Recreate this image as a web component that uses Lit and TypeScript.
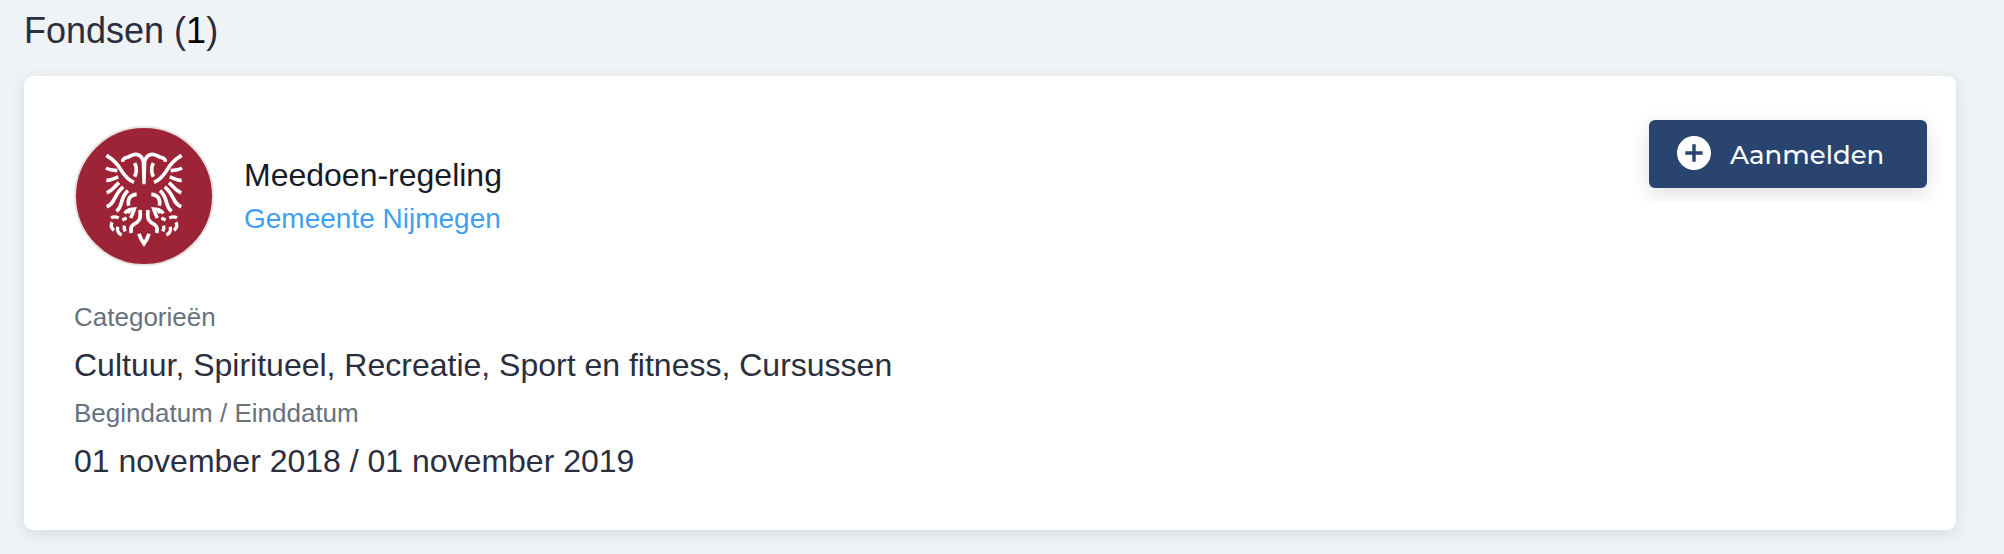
import { LitElement, html, svg, css } from "lit";
import { customElement, property } from "lit/decorators.js";

// Left half of the double-headed eagle; the right half is its mirror image.
const wing = svg`
  <path d="M127 118C149 131 158 141 168 157C179 176 190 191 210 199" />
  <path d="M176 137C176 125 184 126 193 123C202 119 207 114 217 115C232 117 239 130 240 148" />
  <path d="M212 141C219 155 219 167 212 182" />
  <path d="M126 156C137 162 146 163 160 164" />
  <path d="M127 193C140 194 149 187 163 183" />
  <path d="M128 230C144 225 150 213 165 200" />
  <path d="M128 272C155 263 149 234 178 213" />
  <path d="M157 286C178 272 166 247 192 224" />
  <path d="M194 269C190 249 198 236 218 235" />
  <path d="M183 293C186 284 194 280 211 279C208 288 205 296 200 306" />
  <path d="M190 281L199 290" />
  <path d="M228 282C230 303 229 312 219 319C205 326 197 332 202 351" />
  <g stroke-width="10">
    <path d="M141 306C148 301 156 302 164 306" />
    <path d="M175 312L188 306" />
    <path d="M144 319C139 329 141 336 150 343" />
    <path d="M161 332C159 345 161 351 173 357" />
    <path d="M181 329C179 336 180 340 184 346" />
  </g>
`;

@customElement("fund-logo")
class FundLogo extends LitElement {
  static styles = css`
    :host {
      display: block;
      box-sizing: border-box;
      width: 140px;
      height: 140px;
      border-radius: 50%;
      border: 2px solid #e4e2e3;
      background: #9d2437;
      overflow: hidden;
    }
    svg {
      display: block;
      width: 136px;
      height: 136px;
    }
  `;
  render() {
    return html`<svg viewBox="36 36 408 408" fill="none" stroke="#fff" stroke-width="11">
      <g>${wing}</g>
      <g transform="translate(480 0) scale(-1 1)">${wing}</g>
      <path d="M233 140H247L245 205H235Z" fill="#fff" stroke="none" />
      <path d="M225 353Q230 370 240 383Q250 370 255 353" />
    </svg>`;
  }
}

@customElement("apply-button")
class ApplyButton extends LitElement {
  @property() label = "";
  static styles = css`
    :host {
      display: block;
    }
    button {
      display: flex;
      align-items: center;
      box-sizing: border-box;
      width: 278px;
      height: 68px;
      margin: 0;
      padding: 0 0 2px 28px;
      border: 0;
      border-radius: 6px;
      background: #28446f;
      color: #fff;
      box-shadow: 0 6px 20px rgba(0, 0, 0, 0.13);
      clip-path: inset(-20px -20px -14px -20px);
    }
    svg {
      width: 34px;
      height: 34px;
      flex: none;
    }
    .label {
      margin: 4px 0 0 19px;
      font: 500 26px/32px Montserrat, Inter, sans-serif;
      white-space: nowrap;
      -webkit-font-smoothing: antialiased;
    }
  `;
  render() {
    return html`<button>
      <svg viewBox="0 0 34 34">
        <circle cx="17" cy="17" r="17" fill="#fff" />
        <path d="M17 8.3V25.7M8.3 17H25.7" stroke="#28446f" stroke-width="3.4" />
      </svg>
      <span class="label">${this.label}</span>
    </button>`;
  }
}

@customElement("app-root")
class AppRoot extends LitElement {
  static styles = css`
    :host {
      display: block;
      box-sizing: border-box;
      height: 554px;
      padding: 5px 48px 24px 24px;
      background: #eff3f6;
      font-family: "Liberation Sans", Arial, sans-serif;
      color: #2a2e3d;
    }
    .title {
      margin: 0 0 19px;
      font-weight: 400;
      font-size: 36px;
      line-height: 52px;
    }
    .count {
      color: #000;
    }
    .card {
      box-sizing: border-box;
      height: 454px;
      padding: 44px 29px 0 50px;
      border-radius: 9px;
      background: #fff;
      box-shadow: 0 4px 15px rgba(40, 55, 70, 0.12);
    }
    .head {
      display: flex;
      justify-content: space-between;
      align-items: flex-start;
    }
    .fund {
      display: flex;
      align-items: center;
      gap: 30px;
      padding-top: 6px;
    }
    .names {
      padding-top: 2px;
      line-height: 44px;
    }
    .name {
      font-size: 32px;
      color: #161b27;
    }
    .org {
      font-size: 28px;
      line-height: 44px;
      color: #419fef;
    }
    .meta {
      margin: 27px 0 0;
      line-height: 48px;
    }
    .key {
      font-size: 26px;
      color: #67727c;
    }
    .value {
      margin: 0;
      font-size: 32px;
    }
  `;
  render() {
    const meta = [
      ["Categorieën", "Cultuur, Spiritueel, Recreatie, Sport en fitness, Cursussen"],
      ["Begindatum / Einddatum", "01 november 2018 / 01 november 2019"],
    ];
    return html`
      <h1 class="title">Fondsen (<span class="count">1</span>)</h1>
      <section class="card">
        <div class="head">
          <div class="fund">
            <fund-logo></fund-logo>
            <div class="names">
              <div class="name">Meedoen-regeling</div>
              <div class="org">Gemeente Nijmegen</div>
            </div>
          </div>
          <apply-button label="Aanmelden"></apply-button>
        </div>
        <dl class="meta">
          ${meta.map(([key, value]) => html`<dt class="key">${key}</dt><dd class="value">${value}</dd>`)}
        </dl>
      </section>
    `;
  }
}
